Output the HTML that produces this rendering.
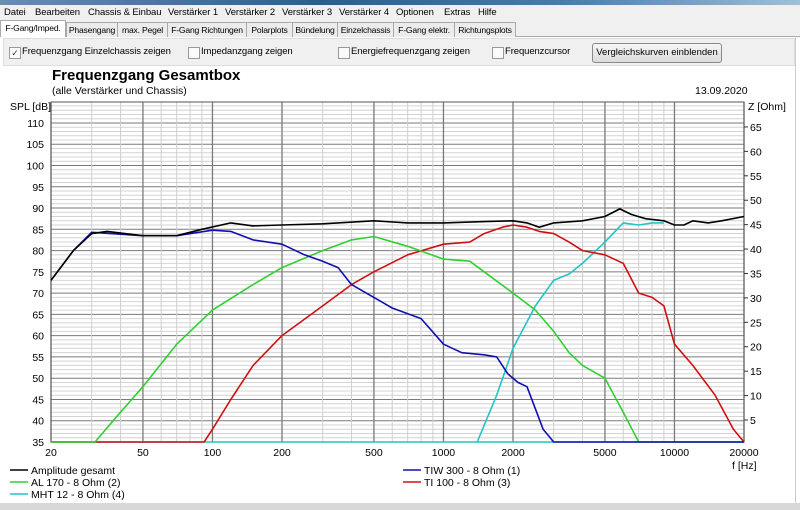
<!DOCTYPE html>
<html><head><meta charset="utf-8"><style>
body{margin:0;width:800px;height:510px;overflow:hidden;background:#fff;font-family:"Liberation Sans",sans-serif;font-size:11px;position:relative}
.ab{position:absolute;white-space:nowrap}
#title{left:0;top:0;width:800px;height:5px;background:linear-gradient(90deg,#6a8db0,#2f5d8a 40%,#4a7aa8 70%,#9fc0d8)}
#menu{left:0;top:5px;width:800px;height:15px;background:#f0f0f0;font-size:9.5px;letter-spacing:-0.1px}
#menu span{position:absolute;top:1px;line-height:14px}
#tabs{left:0;top:20px;width:800px;height:16px;background:#f0f0f0;border-bottom:1px solid #aaa}
.tab{position:absolute;top:2px;height:14px;border:1px solid #aaa;border-bottom:none;background:#ececec;font-size:8.6px;line-height:14px;text-align:center;overflow:hidden;letter-spacing:-0.2px}
#panel{left:3px;top:38px;width:790px;height:26px;background:#f0f0f0;border:1px solid #ddd}
.cb{position:absolute;top:8px;width:10px;height:10px;border:1px solid #999;background:#fafafa}
.lbl{position:absolute;top:7px;font-size:9.5px;letter-spacing:-0.1px}
#btn{position:absolute;left:588px;top:4px;width:128px;height:18px;border:1px solid #888;border-radius:3px;background:linear-gradient(#f6f6f6,#dcdcdc);font-size:9.5px;text-align:center;line-height:18px}
</style></head><body>
<div class="ab" id="title"></div>
<div class="ab" id="menu"><span style="left:4px">Datei</span><span style="left:35px">Bearbeiten</span><span style="left:88px">Chassis &amp; Einbau</span><span style="left:168px">Verstärker 1</span><span style="left:225px">Verstärker 2</span><span style="left:282px">Verstärker 3</span><span style="left:339px">Verstärker 4</span><span style="left:396px">Optionen</span><span style="left:444px">Extras</span><span style="left:478px">Hilfe</span></div>
<div class="ab" id="tabs">
<div class="tab" style="left:0;top:0;height:16px;width:64px;background:#fff">F-Gang/Imped.</div>
<div class="tab" style="left:66px;width:50px">Phasengang</div>
<div class="tab" style="left:117px;width:49px">max. Pegel</div>
<div class="tab" style="left:167px;width:78px">F-Gang Richtungen</div>
<div class="tab" style="left:246px;width:45px">Polarplots</div>
<div class="tab" style="left:292px;width:44px">Bündelung</div>
<div class="tab" style="left:337px;width:55px">Einzelchassis</div>
<div class="tab" style="left:393px;width:60px">F-Gang elektr.</div>
<div class="tab" style="left:454px;width:60px">Richtungsplots</div>
</div>
<div class="ab" id="panel">
<div class="cb" style="left:5px;font-size:9px;line-height:10px;text-align:center;color:#335">✓</div><div class="lbl" style="left:18px">Frequenzgang Einzelchassis zeigen</div>
<div class="cb" style="left:184px"></div><div class="lbl" style="left:197px">Impedanzgang zeigen</div>
<div class="cb" style="left:334px"></div><div class="lbl" style="left:347px">Energiefrequenzgang zeigen</div>
<div class="cb" style="left:488px"></div><div class="lbl" style="left:501px">Frequenzcursor</div>
<div id="btn">Vergleichskurven einblenden</div>
</div>
<div class="ab" style="left:52px;top:67px;font-size:15px;font-weight:bold">Frequenzgang Gesamtbox</div>
<div class="ab" style="left:52px;top:85px;font-size:10.5px">(alle Verstärker und Chassis)</div>
<div class="ab" style="left:695px;top:85px;font-size:10.5px">13.09.2020</div>
<svg class="ab" id="g" style="left:0;top:0" width="800" height="510" font-family="Liberation Sans, sans-serif" font-size="10.5"></svg>
<div class="ab" style="left:0;top:503px;width:800px;height:7px;background:#d8d8d8"></div>
<div class="ab" style="left:795px;top:36px;width:1px;height:467px;background:#ccc"></div>
<script>
var L=51,R=744,T=102,B=442;
function fx(f){return L+(R-L)*Math.log10(f/20)/3;}
function dy(d){return 442-(d-35)*21.27/5;}
var s='';
for(var d=35;d<=115;d++){var y=dy(d);if(y<T)break;s+='<line x1="'+L+'" x2="'+R+'" y1="'+y+'" y2="'+y+'" stroke="'+(d%5==0?'#7a7a7a':'#d4d4d4')+'" stroke-width="1"/>';}
var maj={20:1,50:1,100:1,200:1,500:1,1000:1,2000:1,5000:1,10000:1,20000:1};
[10,100,1000,10000].forEach(function(b){for(var m=1;m<10;m++){var f=b*m;if(f<20||f>20000)continue;var x=fx(f);s+='<line x1="'+x+'" x2="'+x+'" y1="'+T+'" y2="'+B+'" stroke="'+(maj[f]?'#7a7a7a':'#cfcfcf')+'" stroke-width="'+(maj[f]?1.3:1)+'"/>';}});
s+='<rect x="'+L+'" y="'+T+'" width="'+(R-L)+'" height="'+(B-T)+'" fill="none" stroke="#555"/>';
for(var d=35;d<=110;d+=5){s+='<text x="44" y="'+(dy(d)+4)+'" text-anchor="end">'+d+'</text>';}
s+='<text x="10" y="110">SPL [dB]</text><text x="748" y="110">Z [Ohm]</text>';
for(var z=5;z<=65;z+=5){var y=420-(z-5)*24.42/5;s+='<line x1="'+R+'" x2="'+(R+4)+'" y1="'+y+'" y2="'+y+'" stroke="#333"/><text x="750" y="'+(y+4)+'">'+z+'</text>';}
[20,50,100,200,500,1000,2000,5000,10000,20000].forEach(function(f){s+='<text x="'+fx(f)+'" y="456" text-anchor="middle">'+f+'</text>';});
s+='<text x="732" y="469">f [Hz]</text>';
function cv(p,c){var q=p.map(function(a){return fx(a[0]).toFixed(1)+','+dy(a[1]).toFixed(1)}).join(' ');s+='<polyline points="'+q+'" fill="none" stroke="'+c+'" stroke-width="1.6" stroke-linejoin="round"/>';}
cv([[1400,35],[1700,46],[2000,57],[2500,67],[3000,73],[3500,74.5],[4000,77],[5000,82],[6000,86.5],[7000,86],[8000,86.5],[9000,86.5]],'#22c4c4');
cv([[20,35],[1400,35],[20000,35]],'#22c4c4');
cv([[20,35],[92,35],[100,38],[120,45],[150,53],[200,60],[300,67],[400,72],[500,75],[700,79],[1000,81.5],[1300,82],[1500,84],[1800,85.5],[2000,86],[2300,85.5],[2600,84.5],[3000,84],[3500,82],[4000,80],[5000,79],[6000,77],[7000,70],[8000,69],[9000,67],[10000,58],[12000,53],[15000,46],[18000,38],[20000,35]],'#d01010');
cv([[20,35],[31,35],[40,42],[50,48],[70,58],[100,66],[150,72],[200,76],[300,80],[400,82.5],[500,83.3],[700,81],[1000,78],[1300,77.5],[1500,75],[2000,70],[2500,66],[3000,61],[3500,56],[4000,53],[5000,50],[6000,42],[7000,35],[20000,35]],'#30d030');
cv([[20,73],[25,80],[30,84.3],[50,83.5],[70,83.5],[100,84.8],[120,84.5],[150,82.5],[200,81.5],[250,79],[300,77.5],[350,76],[400,72],[500,69],[600,66.5],[800,64],[1000,58],[1200,56],[1500,55.5],[1700,55],[1900,51],[2100,49],[2300,48],[2700,38],[3000,35],[20000,35]],'#1010b0');
cv([[20,73],[25,80],[30,84],[35,84.5],[50,83.5],[70,83.5],[90,85],[120,86.5],[150,85.8],[200,86],[300,86.3],[500,87],[700,86.5],[1000,86.5],[1500,86.8],[2000,87],[2300,86.5],[2600,85.5],[3000,86.5],[4000,87],[5000,88],[5800,89.8],[6500,88.5],[7500,87.5],[9000,87],[10000,86],[11000,86],[12000,87],[14000,86.5],[16000,87],[20000,88]],'#000');
function lg(x,y,c,t){s+='<line x1="'+x+'" x2="'+(x+18)+'" y1="'+y+'" y2="'+y+'" stroke="'+c+'" stroke-width="1.6"/><text x="'+(x+21)+'" y="'+(y+4)+'">'+t+'</text>';}
lg(10,470,'#000','Amplitude gesamt');lg(10,482,'#30d030','AL 170 - 8 Ohm (2)');lg(10,494,'#22c4c4','MHT 12 - 8 Ohm (4)');
lg(403,470,'#1010b0','TIW 300 - 8 Ohm (1)');lg(403,482,'#d01010','TI 100 - 8 Ohm (3)');
document.getElementById('g').innerHTML=s;
</script>
</body></html>
